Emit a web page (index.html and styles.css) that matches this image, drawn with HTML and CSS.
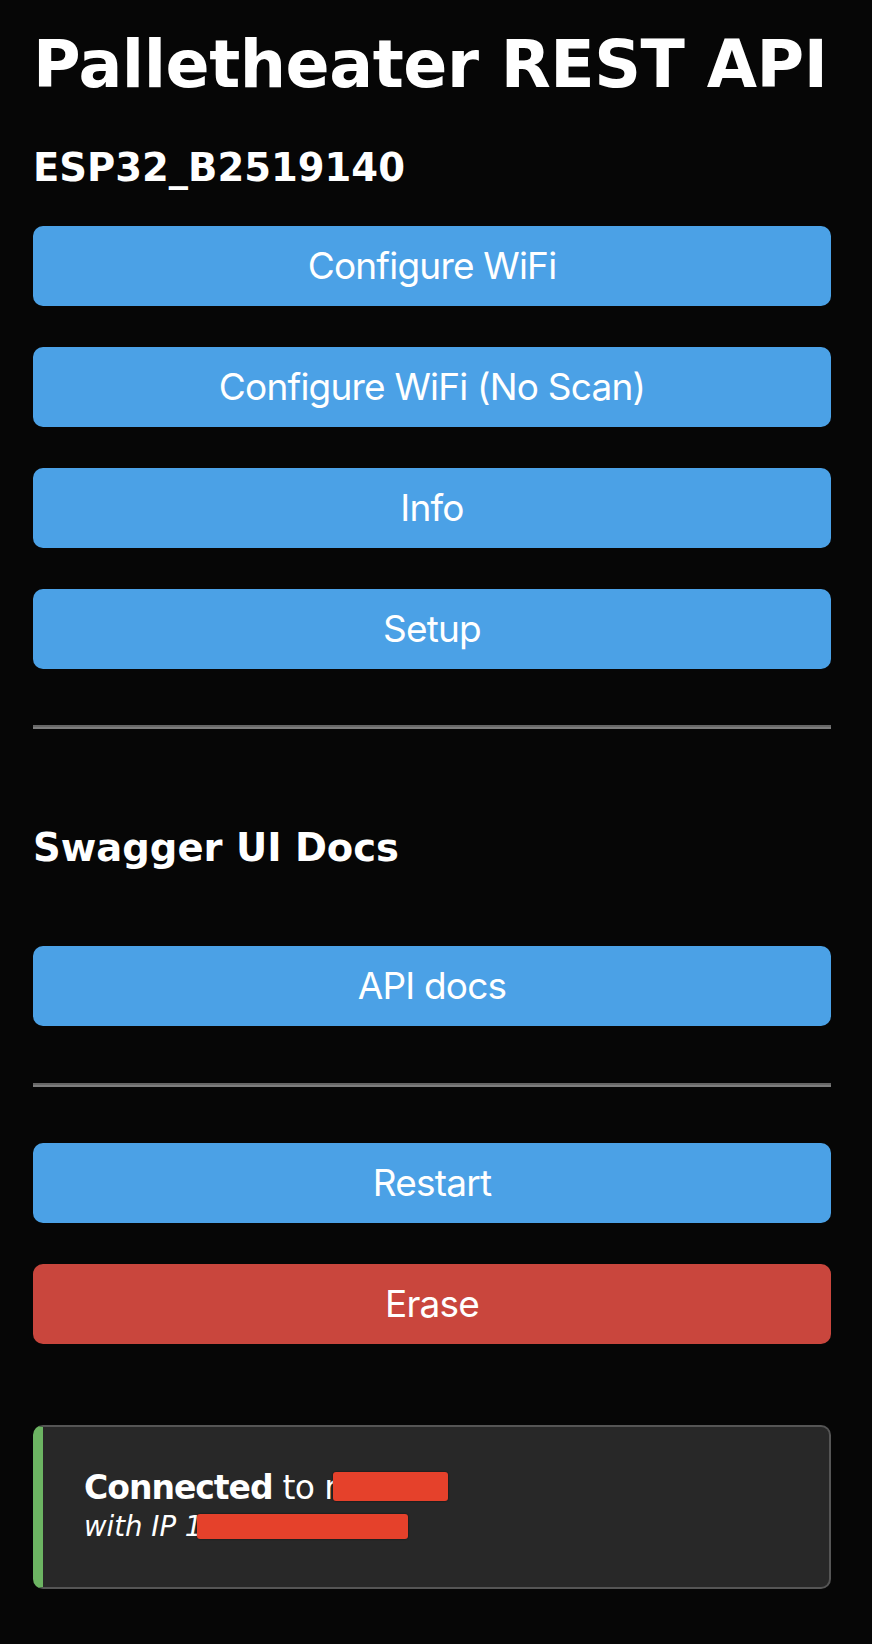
FILE: index.html
```html
<!DOCTYPE html>
<html lang="en">
<head>
<meta charset="utf-8">
<title>Palletheater REST API</title>
<link rel="stylesheet" href="styles.css">
</head>
<body>
<div class="wrap">
  <h1 class="title">Palletheater REST API</h1>
  <h3 class="device">ESP32_B2519140</h3>
  <div class="btn-group group-main">
    <button class="btn" type="button">Configure WiFi</button>
    <button class="btn" type="button">Configure WiFi (No Scan)</button>
    <button class="btn" type="button">Info</button>
    <button class="btn" type="button">Setup</button>
  </div>
  <hr class="rule rule-top">
  <h3 class="section">Swagger UI Docs</h3>
  <div class="btn-group group-docs">
    <button class="btn" type="button">API docs</button>
  </div>
  <hr class="rule rule-mid">
  <div class="btn-group group-system">
    <button class="btn" type="button">Restart</button>
    <button class="btn btn-danger" type="button">Erase</button>
  </div>
  <div class="msg msg-success">
    <div class="msg-line"><strong>Connected</strong> to n<span class="redact redact-ssid" aria-hidden="true"></span></div>
    <div class="msg-line"><em class="msg-small">with IP 1<span class="redact redact-ip" aria-hidden="true"></span></em></div>
  </div>
</div>
</body>
</html>
```

FILE: styles.css
```css
* {
  box-sizing: border-box;
}

html,
body {
  margin: 0;
  background: #060606;
}

body {
  color: #ffffff;
  font-family: "DejaVu Sans", Verdana, sans-serif;
  min-height: 1644px;
}

.wrap {
  display: flex;
  flex-direction: column;
  padding: 26px 41px 0 33px;
}

.title {
  margin: 0;
  font-size: 65px;
  line-height: 78px;
  font-weight: bold;
  letter-spacing: -0.45px;
  white-space: nowrap;
}

.device {
  margin: 40.7px 0 0;
  font-size: 38.5px;
  line-height: 46px;
  font-weight: bold;
}

.section {
  margin: 96px 0 0;
  font-size: 38.5px;
  line-height: 46px;
  font-weight: bold;
}

.btn-group {
  display: flex;
  flex-direction: column;
  gap: 41px;
}

.group-main {
  margin-top: 35.3px;
}

.group-docs {
  margin-top: 75px;
}

.group-system {
  margin-top: 56px;
}

.btn {
  display: block;
  width: 100%;
  height: 80px;
  padding: 0;
  border: 0;
  border-radius: 10px;
  background: #4ba1e6;
  color: #ffffff;
  font-family: Inter, "Liberation Sans", sans-serif;
  font-size: 37px;
  line-height: 80px;
  letter-spacing: -0.8px;
  cursor: pointer;
}

.btn-danger {
  background: #c9463d;
}

.rule {
  height: 0;
  margin: 0;
  border: 0;
  border-top: 2px solid #666666;
  border-bottom: 2px solid #7d7d7d;
}

.rule-top {
  margin-top: 56px;
}

.rule-mid {
  margin-top: 57px;
}

.msg {
  margin-top: 81px;
  padding: 41.6px 41px 41.7px 41px;
  background: #282828;
  border: 2px solid #555555;
  border-left: 10px solid #6cb462;
  border-radius: 10px;
}

.msg-line {
  font-size: 33px;
  line-height: 37.6px;
  white-space: nowrap;
  letter-spacing: -0.6px;
}

.msg-line strong {
  font-weight: bold;
  letter-spacing: -1px;
}

.msg-small {
  font-size: 27.6px;
  font-style: italic;
  letter-spacing: 0;
}

.redact {
  display: inline-block;
  background: #e5412b;
  border-radius: 3px;
  box-shadow: 0 0 2px rgba(0, 0, 0, 0.7);
}

.redact-ssid {
  width: 115px;
  height: 29px;
  margin-left: -12px;
  vertical-align: -2px;
}

.redact-ip {
  width: 211px;
  height: 25px;
  margin-left: -5px;
  vertical-align: -3px;
}
```
